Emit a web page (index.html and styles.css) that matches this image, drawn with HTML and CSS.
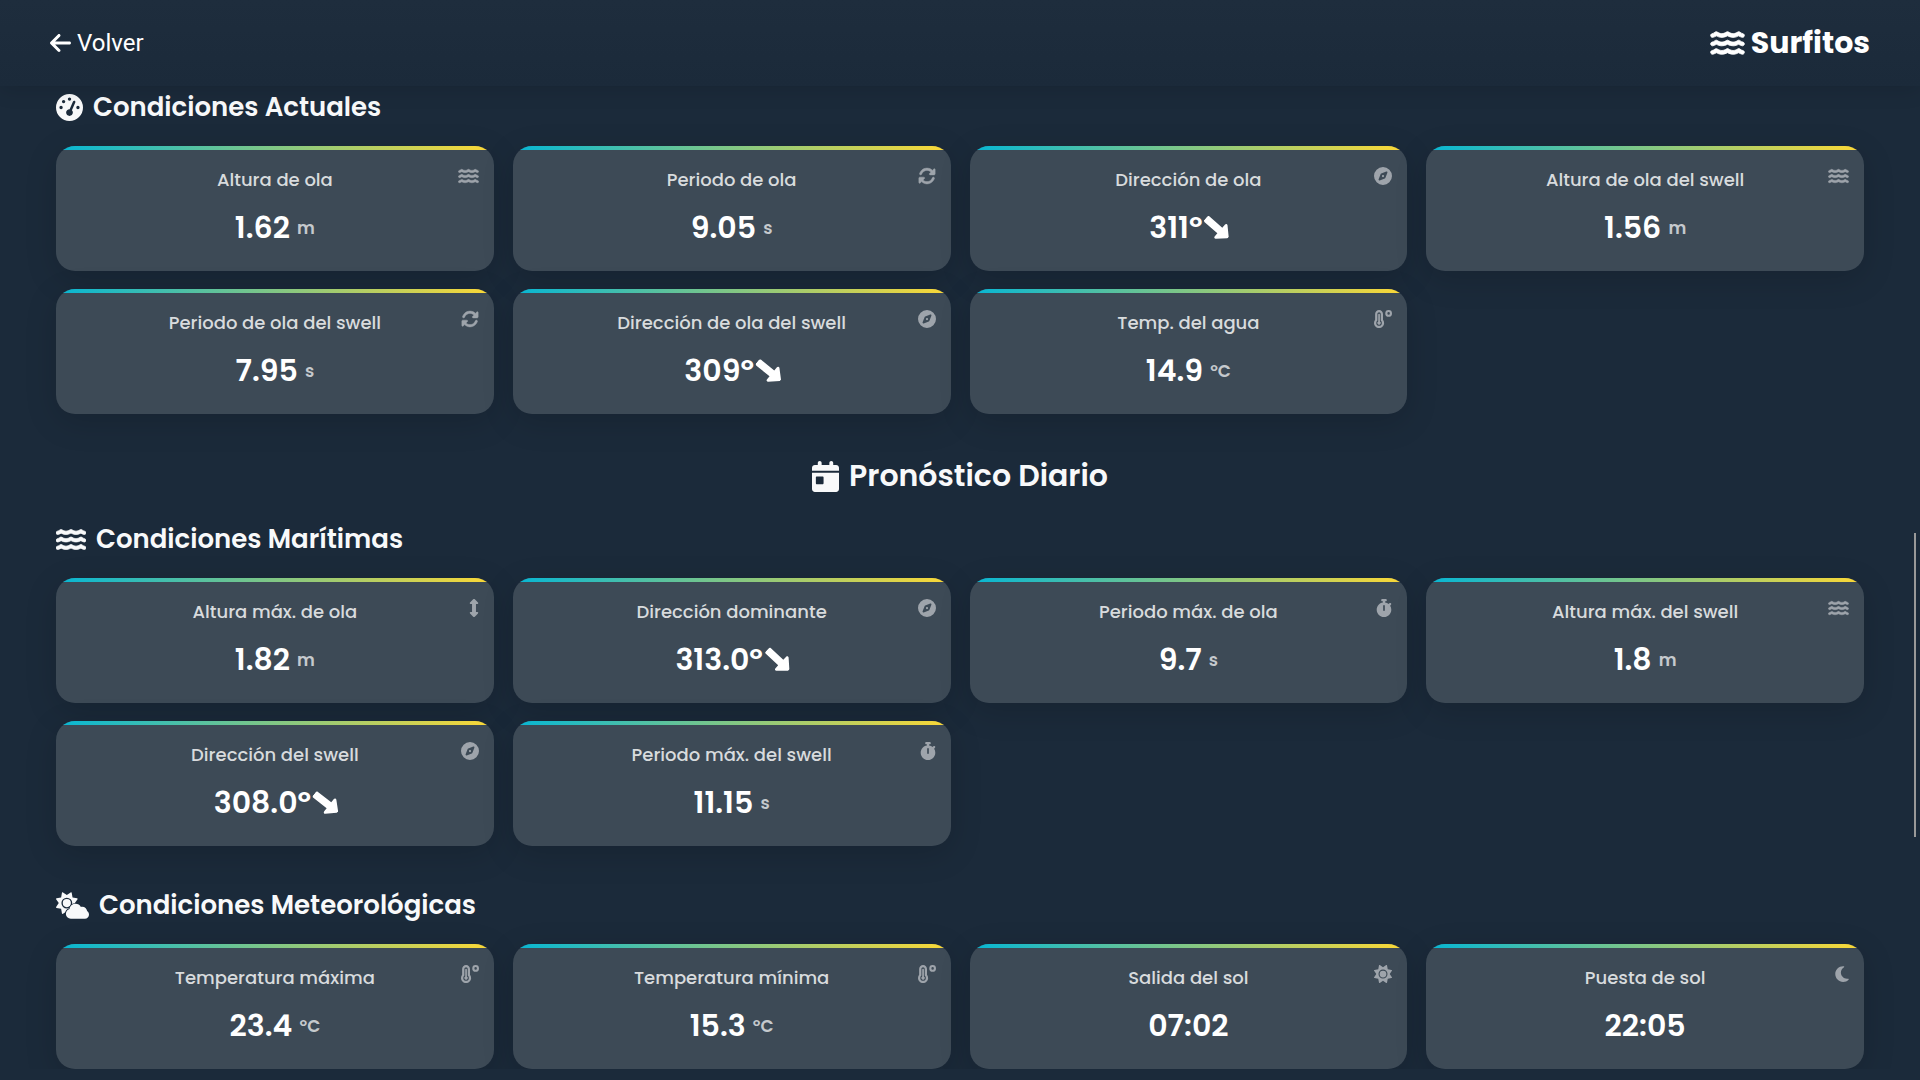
FILE: index.html
```html
<!DOCTYPE html>
<html lang="es">
<head>
<meta charset="utf-8">
<meta name="viewport" content="width=device-width, initial-scale=1">
<title>Surfitos</title>
<link rel="stylesheet" href="styles.css">
</head>
<body>
<svg class="sprite" aria-hidden="true">
  <symbol id="back" viewBox="0 0 448 512"><path d="M9.4 233.4c-12.5 12.5-12.5 32.8 0 45.3l160 160c12.5 12.5 32.8 12.5 45.3 0s12.5-32.8 0-45.3L109.2 288 416 288c17.7 0 32-14.3 32-32s-14.3-32-32-32l-306.7 0L214.6 118.6c12.5-12.5 12.5-32.8 0-45.3s-32.8-12.5-45.3 0l-160 160z"/></symbol>
  <symbol id="water" viewBox="0 0 576 512"><g stroke="currentColor" stroke-width="14"><path id="wave-line" d="M269.5 69.9c11.1-7.9 25.9-7.9 37 0C329 85.4 356.5 96 384 96c26.9 0 55.4-10.8 77.4-26.1c11.9-8.5 28.1-7.8 39.2 1.7c14.4 11.9 32.5 21 50.6 25.2c17.2 4 27.9 21.2 23.9 38.4s-21.2 27.9-38.4 23.9c-24.5-5.7-44.9-16.5-58.2-25C449.5 149.7 417 160 384 160c-31.9 0-60.6-9.9-80.4-18.9c-5.8-2.7-11.1-5.3-15.6-7.7c-4.5 2.4-9.7 5.1-15.6 7.7c-19.8 9-48.5 18.9-80.4 18.9c-33 0-65.5-10.3-94.5-25.8c-13.4 8.4-33.7 19.3-58.2 25c-17.2 4-34.4-6.7-38.4-23.9s6.7-34.4 23.9-38.4C42.8 92.6 61 83.5 75.3 71.6c11.1-9.5 27.3-10.1 39.2-1.7C136.7 85.2 165.1 96 192 96c27.5 0 55-10.6 77.5-26.1z"/><use href="#wave-line" y="144"/><use href="#wave-line" y="288"/></g></symbol>
  <symbol id="gauge" viewBox="0 0 512 512"><path d="M0 256a256 256 0 1 1 512 0A256 256 0 1 1 0 256zM288 96a32 32 0 1 0 -64 0 32 32 0 1 0 64 0zM256 416c35.3 0 64-28.7 64-64c0-17.4-6.9-33.1-18.1-44.6L366 161.7c5.3-12.1-.2-26.3-12.3-31.6s-26.3 .2-31.6 12.3L257.9 288c-.6 0-1.3 0-1.9 0c-35.3 0-64 28.7-64 64s28.7 64 64 64zM176 144a32 32 0 1 0 -64 0 32 32 0 1 0 64 0zM96 288a32 32 0 1 0 0-64 32 32 0 1 0 0 64zm352-32a32 32 0 1 0 -64 0 32 32 0 1 0 64 0z"/></symbol>
  <symbol id="rotate" viewBox="0 0 512 512"><g stroke="currentColor" stroke-width="14"><path id="rotate-half" d="M142.9 142.9c62.2-62.2 162.7-62.5 225.3-1L327 183c-6.9 6.9-8.9 17.2-5.2 26.2s12.5 14.8 22.2 14.8l119.5 0c13.3 0 24-10.7 24-24l0-128c0-9.7-5.8-18.5-14.8-22.2s-19.3-1.7-26.2 5.2L413.4 96.6c-87.6-86.5-228.7-86.2-315.8 1C73.2 122 55.6 150.7 44.8 181.4c-5.9 16.7 2.9 34.9 19.5 40.8s34.9-2.9 40.8-19.5c7.7-21.8 20.2-42.3 37.8-59.8z"/><use href="#rotate-half" transform="rotate(180 256 256)"/></g></symbol>
  <symbol id="compass" viewBox="0 0 512 512"><path d="M256 512A256 256 0 1 0 256 0a256 256 0 1 0 0 512zm50.7-186.9L162.4 380.6c-19.4 7.5-38.5-11.6-31-31l55.5-144.3c3.3-8.5 9.9-15.1 18.4-18.4l144.3-55.5c19.4-7.5 38.5 11.6 31 31L325.1 306.7c-3.2 8.5-9.9 15.1-18.4 18.4zM288 256a32 32 0 1 0 -64 0 32 32 0 1 0 64 0z"/></symbol>
  <symbol id="temp" viewBox="0 0 512 512"><path fill-rule="evenodd" d="M144 0C82 0 32 50 32 112v164C12 302 0 334 0 368c0 80 64 144 144 144s144-64 144-144c0-34-12-66-32-92V112C256 50 206 0 144 0zm0 64c26 0 48 22 48 48v185c20 18 32 43 32 71a80 80 0 0 1-160 0c0-28 12-53 32-71V112c0-26 22-48 48-48z"/><path d="M120 128a24 24 0 0 1 48 0v197a50 50 0 1 1-48 0z"/><path fill-rule="evenodd" d="M416 0a96 96 0 1 0 0 192 96 96 0 1 0 0-192zm0 60a36 36 0 1 1 0 72 36 36 0 1 1 0-72z"/></symbol>
  <symbol id="calendar" viewBox="0 0 448 512"><path d="M128 0c17.7 0 32 14.3 32 32l0 32 128 0 0-32c0-17.7 14.3-32 32-32s32 14.3 32 32l0 32 48 0c26.5 0 48 21.5 48 48l0 48L0 160l0-48C0 85.5 21.5 64 48 64l48 0 0-32c0-17.7 14.3-32 32-32zM0 192l448 0 0 272c0 26.5-21.5 48-48 48L48 512c-26.5 0-48-21.5-48-48L0 192zm80 64c-8.8 0-16 7.2-16 16l0 96c0 8.8 7.2 16 16 16l96 0c8.8 0 16-7.2 16-16l0-96c0-8.8-7.2-16-16-16l-96 0z"/></symbol>
  <symbol id="updown" viewBox="0 0 256 512"><path d="M128 0c9 0 17 4 23 10l90 90c17 17 6 44-18 44h-39v224h39c24 0 35 27 18 44l-90 90c-13 13-33 13-46 0l-90-90c-17-17-6-44 18-44h39V144H33c-24 0-35-27-18-44l90-90c6-6 14-10 23-10z"/></symbol>
  <symbol id="stopwatch" viewBox="0 0 448 512"><path d="M176 0c-17.7 0-32 14.3-32 32s14.3 32 32 32l16 0 0 34.4C92.3 113.8 16 200 16 304c0 114.9 93.1 208 208 208s208-93.1 208-208c0-41.8-12.3-80.7-33.5-113.2l24.1-24.1c12.5-12.5 12.5-32.8 0-45.3s-32.8-12.5-45.3 0L355.7 143c-28.1-23-62.2-38.8-99.7-44.6L256 64l16 0c17.7 0 32-14.3 32-32s-14.3-32-32-32L224 0 176 0zm72 192l0 128c0 13.3-10.7 24-24 24s-24-10.7-24-24l0-128c0-13.3 10.7-24 24-24s24 10.7 24 24z"/></symbol>
  <symbol id="sun" viewBox="0 0 512 512"><path id="sun-shape" d="M361.5 1.2c5 2.1 8.6 6.6 9.6 11.9L391 121l107.9 19.8c5.3 1 9.8 4.6 11.9 9.6s1.5 10.7-1.6 15.2L446.9 256l62.3 90.3c3.1 4.5 3.7 10.2 1.6 15.2s-6.6 8.6-11.9 9.6L391 391 371.1 498.9c-1 5.3-4.6 9.8-9.6 11.9s-10.7 1.5-15.2-1.6L256 446.9l-90.3 62.3c-4.5 3.1-10.2 3.7-15.2 1.6s-8.6-6.6-9.6-11.9L121 391 13.1 371.1c-5.3-1-9.8-4.6-11.9-9.6s-1.5-10.7 1.6-15.2L65.1 256 2.8 165.7c-3.1-4.5-3.7-10.2-1.6-15.2s6.6-8.6 11.9-9.6L121 121 140.9 13.1c1-5.3 4.6-9.8 9.6-11.9s10.7-1.5 15.2 1.6L256 65.1 346.3 2.8c4.5-3.1 10.2-3.7 15.2-1.6zM160 256a96 96 0 1 1 192 0 96 96 0 1 1 -192 0zm224 0a128 128 0 1 0 -256 0 128 128 0 1 0 256 0z"/></symbol>
  <symbol id="moon" viewBox="0 0 384 512"><path d="M223.5 32C100 32 0 132.3 0 256S100 480 223.5 480c60.6 0 115.5-24.2 155.8-63.4c5-4.9 6.3-12.5 3.1-18.7s-10.1-9.7-17-8.5c-9.8 1.7-19.8 2.6-30.1 2.6c-96.9 0-175.5-78.8-175.5-176c0-65.8 36-123.1 89.3-153.3c6.1-3.5 9.2-10.5 7.7-17.3s-7.3-11.9-14.3-12.5c-6.3-.5-12.6-.8-19-.8z"/></symbol>
  <symbol id="cloudsun" viewBox="0 0 640 512"><use href="#sun-shape" transform="scale(.82)"/><path class="cloud" d="M288 512c-53 0-96-43-96-96 0-44 30-81 70-92 9-64 64-100 118-100 44 0 82 24 103 59 8-2 16-3 25-3 50 0 90 38 96 84 22 16 36 42 36 70 0 43-35 78-80 78z"/></symbol>
  <symbol id="uplong" viewBox="0 0 320 512"><path d="M318 177.5c3.8-8.8 2-19-4.6-26l-136-144C172.9 2.7 166.6 0 160 0s-12.9 2.7-17.4 7.5l-136 144c-6.6 7-8.4 17.2-4.6 26S14.4 192 24 192H96l0 288c0 17.7 14.3 32 32 32h64c17.7 0 32-14.3 32-32l0-288h72c9.6 0 18.2-5.7 22-14.5z"/></symbol>
</svg>

<header class="topbar">
  <a class="back" href="#"><svg class="icon back-icon"><use href="#back"/></svg>Volver</a>
  <a class="brand" href="#"><svg class="icon brand-icon"><use href="#water"/></svg>Surfitos</a>
</header>

<main class="content">
  <section class="group">
    <h3 class="heading"><svg class="icon gauge-icon"><use href="#gauge"/></svg>Condiciones Actuales</h3>
    <div class="cards">
      <article class="card"><svg class="icon corner wide"><use href="#water"/></svg><h4 class="label">Altura de ola</h4><p class="value">1.62 <span class="unit">m</span></p></article>
      <article class="card"><svg class="icon corner"><use href="#rotate"/></svg><h4 class="label">Periodo de ola</h4><p class="value">9.05 <span class="unit">s</span></p></article>
      <article class="card"><svg class="icon corner"><use href="#compass"/></svg><h4 class="label">Dirección de ola</h4><p class="value">311º<svg class="icon arrow" style="transform: rotate(131deg)"><use href="#uplong"/></svg></p></article>
      <article class="card"><svg class="icon corner wide"><use href="#water"/></svg><h4 class="label">Altura de ola del swell</h4><p class="value">1.56 <span class="unit">m</span></p></article>
      <article class="card"><svg class="icon corner"><use href="#rotate"/></svg><h4 class="label">Periodo de ola del swell</h4><p class="value">7.95 <span class="unit">s</span></p></article>
      <article class="card"><svg class="icon corner"><use href="#compass"/></svg><h4 class="label">Dirección de ola del swell</h4><p class="value">309º<svg class="icon arrow" style="transform: rotate(129deg)"><use href="#uplong"/></svg></p></article>
      <article class="card"><svg class="icon corner"><use href="#temp"/></svg><h4 class="label">Temp. del agua</h4><p class="value">14.9 <span class="unit">ºC</span></p></article>
    </div>
  </section>

  <h2 class="title"><svg class="icon calendar-icon"><use href="#calendar"/></svg>Pronóstico Diario</h2>

  <section class="group">
    <h3 class="heading"><svg class="icon water-icon"><use href="#water"/></svg>Condiciones Marítimas</h3>
    <div class="cards">
      <article class="card"><svg class="icon corner slim"><use href="#updown"/></svg><h4 class="label">Altura máx. de ola</h4><p class="value">1.82 <span class="unit">m</span></p></article>
      <article class="card"><svg class="icon corner"><use href="#compass"/></svg><h4 class="label">Dirección dominante</h4><p class="value">313.0º<svg class="icon arrow" style="transform: rotate(133deg)"><use href="#uplong"/></svg></p></article>
      <article class="card"><svg class="icon corner narrow"><use href="#stopwatch"/></svg><h4 class="label">Periodo máx. de ola</h4><p class="value">9.7 <span class="unit">s</span></p></article>
      <article class="card"><svg class="icon corner wide"><use href="#water"/></svg><h4 class="label">Altura máx. del swell</h4><p class="value">1.8 <span class="unit">m</span></p></article>
      <article class="card"><svg class="icon corner"><use href="#compass"/></svg><h4 class="label">Dirección del swell</h4><p class="value">308.0º<svg class="icon arrow" style="transform: rotate(128deg)"><use href="#uplong"/></svg></p></article>
      <article class="card"><svg class="icon corner narrow"><use href="#stopwatch"/></svg><h4 class="label">Periodo máx. del swell</h4><p class="value">11.15 <span class="unit">s</span></p></article>
    </div>
  </section>

  <section class="group">
    <h3 class="heading"><svg class="icon cloudsun-icon"><use href="#cloudsun"/></svg>Condiciones Meteorológicas</h3>
    <div class="cards">
      <article class="card"><svg class="icon corner"><use href="#temp"/></svg><h4 class="label">Temperatura máxima</h4><p class="value">23.4 <span class="unit">ºC</span></p></article>
      <article class="card"><svg class="icon corner"><use href="#temp"/></svg><h4 class="label">Temperatura mínima</h4><p class="value">15.3 <span class="unit">ºC</span></p></article>
      <article class="card"><svg class="icon corner"><use href="#sun"/></svg><h4 class="label">Salida del sol</h4><p class="value">07:02</p></article>
      <article class="card"><svg class="icon corner moon"><use href="#moon"/></svg><h4 class="label">Puesta de sol</h4><p class="value">22:05</p></article>
    </div>
  </section>
</main>
<div class="scroll-thumb"></div>
</body>
</html>
```
FILE: styles.css
```css
* {
  box-sizing: border-box;
  margin: 0;
}

body {
  background: #1b2a3a;
  color: #f8f9fa;
  font-family: Poppins, Inter, sans-serif;
}

a {
  color: #fff;
  text-decoration: none;
}

.sprite {
  position: absolute;
  width: 0;
  height: 0;
}

.icon {
  flex: none;
  fill: currentColor;
}

.topbar {
  position: sticky;
  top: 0;
  z-index: 2;
  display: flex;
  align-items: center;
  justify-content: space-between;
  height: 86px;
  padding: 0 50px;
  background: linear-gradient(#1e2d3d, #1b2a3a);
  box-shadow: 0 4px 20px rgba(0, 0, 0, 0.12);
}

.back {
  display: flex;
  align-items: center;
  gap: 6px;
  font: 24px/32px Roboto, sans-serif;
}

.back-icon {
  width: 21px;
  height: 24px;
}

.brand {
  display: flex;
  align-items: center;
  gap: 6px;
  font-size: 30px;
  font-weight: 700;
  line-height: 32px;
}

.brand-icon {
  width: 35px;
  height: 30px;
}

.content {
  padding: 0 56px;
}

.heading {
  display: flex;
  align-items: center;
  gap: 10px;
  height: 42px;
  margin-bottom: 18px;
  font-size: 26px;
  font-weight: 600;
}

.gauge-icon {
  width: 27px;
  height: 27px;
}

.water-icon {
  width: 30px;
  height: 27px;
}

.cloudsun-icon {
  width: 33px;
  height: 27px;
}

.cloud {
  stroke: #1b2a3a;
  stroke-width: 32px;
  paint-order: stroke;
}

.cards {
  display: grid;
  grid-template-columns: repeat(4, 1fr);
  gap: 18px 19px;
}

.card {
  position: relative;
  overflow: hidden;
  height: 125px;
  padding-top: 20px;
  border-radius: 19px;
  background: #3d4a56;
  box-shadow: 0 8px 32px rgba(0, 0, 0, 0.15);
  text-align: center;
}

.card::before {
  content: "";
  position: absolute;
  top: 0;
  left: 0;
  right: 0;
  height: 4px;
  background: linear-gradient(90deg, #06b6d4, #fdd835);
}

.corner {
  position: absolute;
  top: 21px;
  right: 15px;
  width: 18px;
  height: 18px;
  color: #9ea4ab;
}

.wide {
  width: 21px;
}

.narrow {
  width: 16px;
}

.moon {
  width: 14px;
}

.slim {
  width: 10px;
}

.label {
  color: #d8dbdd;
  font-size: 18px;
  font-weight: 500;
  line-height: 28px;
}

.value {
  display: flex;
  align-items: center;
  justify-content: center;
  height: 44px;
  margin-top: 12px;
  color: #fff;
  font-size: 30px;
  font-weight: 600;
  white-space: pre;
}

.unit {
  color: #c5c9cd;
  font-size: 17px;
  font-weight: 600;
}

.arrow {
  width: 20px;
  height: 30px;
  margin-left: 5px;
}

.title {
  display: flex;
  align-items: center;
  justify-content: center;
  gap: 10px;
  height: 44px;
  margin: 40px 0 20px;
  font-size: 30px;
  font-weight: 600;
}

.calendar-icon {
  width: 27px;
  height: 31px;
}

.group + .group {
  margin-top: 38px;
}

.scroll-thumb {
  position: fixed;
  top: 533px;
  right: 4px;
  width: 2px;
  height: 304px;
  background: #999;
}
```
